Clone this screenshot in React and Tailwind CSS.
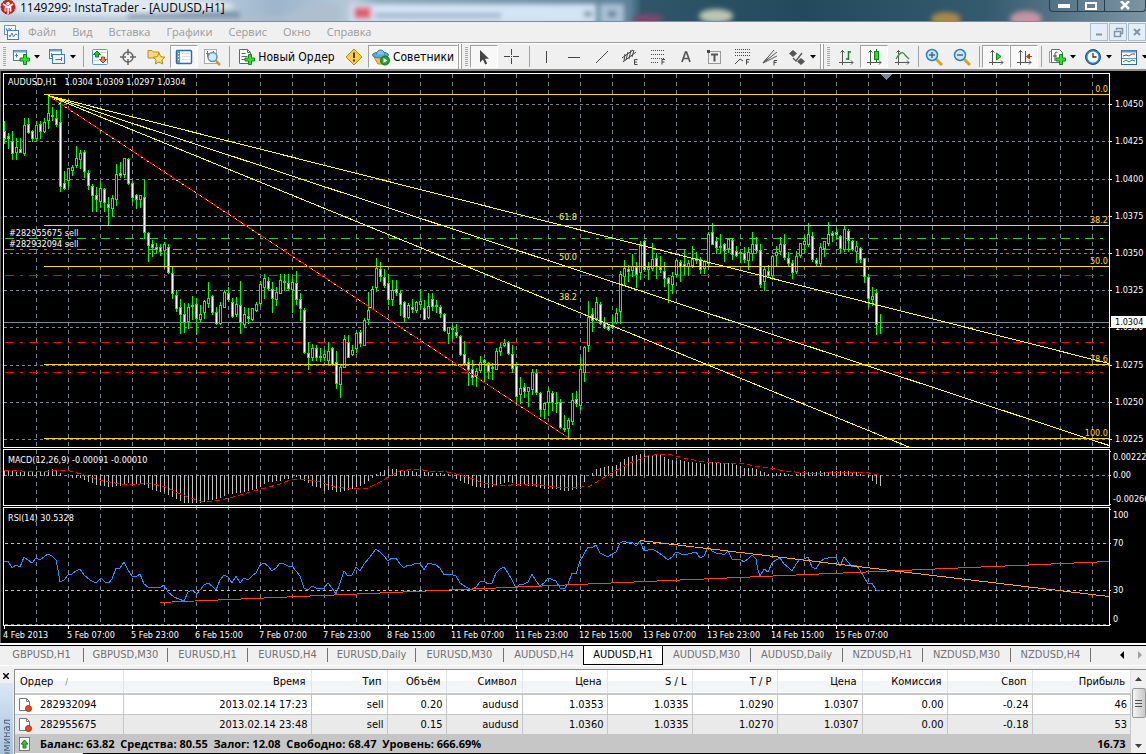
import React, { useState } from 'react';
import clsx from 'clsx';

const menuItems = ['Файл', 'Вид', 'Вставка', 'Графики', 'Сервис', 'Окно', 'Справка'];

const chartTabs = [
  { name: 'GBPUSD,H1', width: 'w-[84px]' },
  { name: 'GBPUSD,M30', width: 'w-[84px]' },
  { name: 'EURUSD,H1', width: 'w-[80px]' },
  { name: 'EURUSD,H4', width: 'w-[80px]' },
  { name: 'EURUSD,Daily', width: 'w-[88px]' },
  { name: 'EURUSD,M30', width: 'w-[88px]' },
  { name: 'AUDUSD,H4', width: 'w-[80px]' },
  { name: 'AUDUSD,H1', width: 'w-[80px]' },
  { name: 'AUDUSD,M30', width: 'w-[88px]' },
  { name: 'AUDUSD,Daily', width: 'w-[92px]' },
  { name: 'NZDUSD,H1', width: 'w-[80px]' },
  { name: 'NZDUSD,M30', width: 'w-[88px]' },
  { name: 'NZDUSD,H4', width: 'w-[80px]' },
];

const columns = [
  { title: 'Ордер', width: 'w-[108px]' },
  { title: 'Время', width: 'w-[188px]' },
  { title: 'Тип', width: 'w-[76px]' },
  { title: 'Объём', width: 'w-[59px]' },
  { title: 'Символ', width: 'w-[76px]' },
  { title: 'Цена', width: 'w-[85px]' },
  { title: 'S / L', width: 'w-[85px]' },
  { title: 'T / P', width: 'w-[85px]' },
  { title: 'Цена', width: 'w-[85px]' },
  { title: 'Комиссия', width: 'w-[85px]' },
  { title: 'Своп', width: 'w-[85px]' },
  { title: 'Прибыль', width: '' },
];

const orders = [
  ['282932094', '2013.02.14 17:23', 'sell', '0.20', 'audusd', '1.0353', '1.0335', '1.0290', '1.0307', '0.00', '-0.24', '46'],
  ['282955675', '2013.02.14 23:48', 'sell', '0.15', 'audusd', '1.0360', '1.0335', '1.0270', '1.0307', '0.00', '-0.18', '53'],
];

// one candle every 4px: high, body top, body bottom, low; "d" = down candle
const candles = `
121 131 138 143 d;133 136 138 148 d;131 141 153 159 d;138 147 152 159 u;138 149 152 152 d;118 125 153 155 u;118 124 132 133 d;130 131 138 141 d;
121 125 138 141 u;121 124 131 138 d;118 122 131 132 u;94 113 120 128 u;107 115 116 120 d;110 118 124 126 d;100 122 186 191 d;171 183 188 189 d;
168 168 180 186 u;165 167 170 175 u;146 158 165 167 u;150 153 159 168 u;150 152 171 177 d;170 173 185 189 d;184 186 195 211 d;187 195 199 211 d;
182 188 201 207 u;188 189 202 211 d;197 204 207 225 d;195 198 208 216 u;164 174 199 205 u;162 173 175 177 d;158 158 174 177 u;158 159 183 184 d;
181 183 197 201 d;194 195 199 208 d;195 195 199 207 u;180 197 232 238 d;232 233 245 261 d;240 244 247 256 d;243 247 249 253 d;244 247 251 255 d;
242 244 250 267 u;244 247 272 273 d;267 273 293 298 d;290 295 308 311 d;299 307 314 333 d;303 314 322 332 d;303 307 321 328 u;296 305 306 319 d;
298 304 318 334 d;305 314 319 321 u;300 301 312 318 u;282 298 303 307 u;295 296 312 314 d;307 312 323 324 d;302 305 323 324 u;290 292 307 307 u;
287 293 299 301 d;298 302 316 317 d;297 304 314 316 u;281 305 322 333 d;307 314 324 327 u;308 316 318 323 d;308 308 319 320 u;302 304 310 311 u;
281 284 303 305 u;274 278 287 298 u;277 281 288 289 d;282 289 298 312 d;287 292 299 305 u;274 280 293 293 u;274 281 282 290 d;274 283 288 290 d;
278 282 289 312 u;271 283 299 304 d;293 299 308 320 d;308 310 352 353 d;342 353 357 369 d;344 348 357 360 u;345 348 357 360 d;348 356 357 361 d;
350 354 357 360 u;342 351 360 363 u;347 348 364 365 d;351 362 383 388 d;365 367 384 397 u;335 339 367 367 u;335 342 357 357 d;345 350 354 355 u;
332 333 348 352 u;330 332 343 346 d;318 320 345 345 u;292 310 319 324 u;286 289 308 309 u;258 268 287 291 u;262 269 276 281 d;269 277 285 287 d;
274 283 299 304 d;280 290 299 305 u;280 289 292 295 d;290 293 304 315 d;301 302 317 321 d;303 305 317 318 u;299 307 309 312 d;301 302 310 312 u;
289 301 304 309 u;300 308 319 319 d;293 306 317 318 u;293 299 306 310 d;300 305 306 312 d;305 307 313 317 d;313 314 330 331 d;327 327 333 343 u;
325 328 329 338 d;324 332 335 337 d;335 336 354 355 d;341 354 363 365 d;358 362 369 385 d;360 369 377 384 d;368 371 375 386 u;356 362 370 372 u;
359 360 362 382 d;362 363 371 378 d;363 367 368 379 d;348 351 369 369 u;343 347 351 355 u;339 343 345 346 u;341 342 353 354 d;345 354 368 372 d;
362 366 396 403 d;377 388 394 403 u;383 387 391 397 d;387 387 391 406 u;369 372 389 394 u;369 373 392 394 d;392 393 409 416 d;402 403 409 418 u;
388 391 402 415 u;391 393 402 410 d;392 403 403 412 d;399 402 427 428 d;415 428 429 431 d;418 420 428 438 u;393 400 421 424 u;391 399 403 406 d;
357 369 405 409 u;346 347 372 381 u;301 317 345 351 u;308 314 320 331 d;297 302 318 320 u;302 304 323 324 d;317 323 327 328 d;325 326 329 330 d;
315 325 327 328 u;308 313 322 323 u;271 274 311 323 u;260 268 276 285 u;265 269 271 281 d;254 266 270 276 u;262 267 274 287 d;241 244 272 279 u;
240 241 269 271 d;262 267 269 279 u;243 259 268 270 u;253 258 266 278 d;256 267 269 272 d;262 271 278 286 d;277 278 283 302 d;272 276 284 293 u;
259 260 274 276 u;260 262 266 281 d;249 264 266 274 d;260 263 266 275 u;246 259 265 267 u;252 258 260 263 d;257 259 269 273 d;260 261 268 273 u;
232 234 263 265 u;223 232 244 244 d;237 241 247 253 d;234 246 247 253 d;243 244 250 261 d;238 239 248 252 u;238 240 254 259 d;246 251 255 256 d;
252 252 253 262 d;247 253 259 262 d;247 252 260 269 u;232 244 253 260 u;237 244 250 252 d;244 250 284 287 d;266 269 281 290 u;265 271 275 276 d;
255 256 275 279 u;246 252 255 266 u;237 244 251 254 u;234 244 257 259 d;252 258 263 266 d;260 263 272 278 d;251 256 271 273 u;243 243 255 257 u;
235 241 244 252 u;223 234 244 246 u;232 236 259 261 d;258 260 263 266 d;243 247 263 265 u;241 241 248 256 u;222 234 243 245 u;231 233 235 241 d;
228 232 234 239 d;235 236 248 252 d;226 229 249 251 u;229 231 240 251 d;240 241 249 250 d;241 246 251 262 u;247 248 259 262 d;258 258 276 282 d;
274 277 298 307 d;287 296 299 305 u;289 293 324 334 d;314 322 322 333 d`
  .trim()
  .split(';')
  .map((row) => {
    const [high, top, bottom, low, dir] = row.trim().split(' ');
    return { high: +high, top: +top, bottom: +bottom, low: +low, down: dir === 'd' };
  });

const macdSeries = [
  {
    start: 4,
    values: [
      4, 4, 4, 3, 3, 3, 4, 4, 4, 4, 4, 5, 6, 5, 2, 0, 0, -2, -2, -2, -4, -6, -7, -9, -9, -10, -11, -11, -10, -10, -8, -7, -9, -8, -8,
      -9, -12, -14, -15, -16, -16, -19, -21, -23, -25, -27, -27, -27, -27, -27, -26, -24, -24, -23, -22, -20, -18, -18, -17, -17,
      -16, -15, -14, -13, -11, -8, -6, -6, -5, -5, -3, -3, -2, -1, -3, -5, -7, -10, -11, -12, -15, -14, -14, -16, -16, -15, -14,
      -13, -11, -10, -8, -5, -2, 1, 3, 5, 6, 6, 6, 5, 4, 4, 4, 3, 5, 3, 3, 2, 2, 2, 1, 1,
    ],
  },
  {
    start: 456,
    values: [
      -3, -5, -7, -8, -10, -11, -11, -12, -12, -11, -10, -8, -7, -6, -7, -10, -10, -9, -10, -10, -11, -12, -13, -13, -13, -13, -14,
      -15, -15, -14, -13, -13, -6, 0, 2, 6, 7, 8, 9, 9, 10, 13, 16, 18, 19, 20, 21, 21, 20, 20, 21, 20, 18, 16, 15, 14, 15, 14, 13,
      13, 12, 12, 11, 13, 13, 12, 12, 12, 12, 11, 10, 9, 7, 7, 7, 6, 4, 3, 1, 2, 2, 2, 2, 1, 0, 1, 2, 4, 3, 3, 3, 4, 3, 2, 4, 4, 4,
      4, 4, 3, 3, 1, 0, -2, -5, -8, -10,
    ],
  },
];

const macdSignal =
  '4,470 40,472 60,470 70,471 84,475 100,480 120,484 140,484 150,483 165,487 185,496 200,501 215,501 230,498 250,492 265,488 280,484 290,480 303,479 320,482 335,487 350,489 368,488 380,482 390,476 400,471 415,469 430,471 447,472 460,475 470,478 483,483 503,486 520,484 535,484 553,487 575,488 590,486 600,480 610,474 630,463 648,456 660,454 672,455 688,459 705,462 720,463 740,463 755,466 770,468 785,471 805,473 825,473 840,472 865,472 877,475';

const rsiLine =
  '4,561 8,561 12,568 16,565 20,567 24,557 28,560 32,563 36,558 40,560 44,557 48,554 52,556 56,560 58,570 60,582 64,580 68,575 72,574 76,571 80,569 84,575 90,580 96,583 101,578 105,582 109,583 112,579 116,568 120,568 124,562 128,570 132,576 136,577 140,574 144,584 148,587 160,588 164,585 168,592 174,597 184,601 188,592 192,590 197,594 200,590 204,585 208,583 212,586 216,590 220,580 224,575 228,577 232,583 236,576 240,583 244,578 248,580 252,576 256,573 260,565 264,563 268,566 272,571 276,568 280,563 284,564 288,566 292,566 296,571 300,576 304,588 308,590 312,586 316,588 324,588 328,583 332,588 336,594 340,583 344,571 348,576 352,575 356,567 360,571 364,564 370,557 376,549 380,552 384,556 388,561 392,558 396,558 400,564 404,568 408,565 412,565 416,563 420,563 424,570 428,563 432,564 436,565 440,568 444,575 450,574 456,576 460,583 466,587 472,590 476,587 480,582 484,581 488,584 492,583 496,573 500,569 504,567 508,573 512,580 516,588 520,584 524,584 528,582 532,574 536,581 540,586 544,583 548,578 556,581 560,588 564,589 568,584 572,573 576,574 580,561 584,554 588,547 592,548 596,545 600,553 604,555 608,557 612,554 616,552 620,543 624,541 628,543 632,542 636,546 640,541 644,551 648,550 652,549 656,551 662,555 668,560 672,557 676,552 684,555 688,554 696,552 700,558 704,556 708,547 712,551 716,553 720,553 724,555 728,551 732,559 740,559 744,562 748,559 752,555 756,559 758,570 760,576 764,569 768,572 772,563 776,560 780,558 784,564 788,567 792,571 796,564 800,559 804,559 808,557 812,567 816,569 820,562 824,559 828,558 832,557 836,558 840,566 844,557 848,562 852,567 856,565 860,570 864,577 868,584 872,583 876,590 880,590';

const gridX = Array.from({ length: 34 }, (_, i) => 36 + i * 32);

const priceLevels = [
  { y: 104, label: '1.0450' },
  { y: 141, label: '1.0425' },
  { y: 179, label: '1.0400' },
  { y: 216, label: '1.0375' },
  { y: 253, label: '1.0350' },
  { y: 290, label: '1.0325' },
  { y: 327, label: '1.0300' },
  { y: 365, label: '1.0275' },
  { y: 402, label: '1.0250' },
  { y: 439, label: '1.0225' },
];

const fibLevels = [
  { y: 94, label: '0.0' },
  { y: 225, label: '38.2' },
  { y: 266, label: '50.0' },
  { y: 364, label: '78.6' },
  { y: 438, label: '100.0' },
];

const fanLines = [
  { x: 1109, y: 363, label: '61.8', labelY: 220 },
  { x: 1109, y: 445, label: '50.0', labelY: 260 },
  { x: 910, y: 447, label: '38.2', labelY: 300 },
];

const timeLabels = [
  '4 Feb 2013', '5 Feb 07:00', '5 Feb 23:00', '6 Feb 15:00', '7 Feb 07:00', '7 Feb 23:00', '8 Feb 15:00',
  '11 Feb 07:00', '11 Feb 23:00', '12 Feb 15:00', '13 Feb 07:00', '13 Feb 23:00', '14 Feb 15:00', '15 Feb 07:00',
];

function HLine({ y, x1 = 4, x2 = 1109, ...rest }) {
  return <line x1={x1} y1={y + 0.5} x2={x2} y2={y + 0.5} {...rest} />;
}

function Chart() {
  return (
    <svg
      viewBox="0 71 1146 572"
      className="block w-full bg-black font-['DejaVu_Sans_Condensed','DejaVu_Sans',sans-serif] text-[9px]"
      role="img"
      aria-label="AUDUSD,H1"
    >
      <g shapeRendering="crispEdges" fill="none" strokeWidth="1">
        <rect x="0" y="71" width="1" height="572" fill="#606060" />

        {/* grid */}
        <g stroke="#778899" strokeDasharray="3 3">
          {gridX.map((x) => (
            <line key={x} x1={x + 0.5} y1="74" x2={x + 0.5} y2="625" strokeDasharray="4 4" />
          ))}
          {priceLevels.map((p) => (
            <HLine key={p.y} y={p.y} />
          ))}
          <HLine y={475} />
        </g>
        <g stroke="#c0c0c0" strokeDasharray="3 3">
          <HLine y={543} x1={5} />
          <HLine y={590} x1={5} />
          <HLine y={624} x1={5} stroke="#778899" />
        </g>

        {/* price line and orders */}
        <HLine y={322} stroke="#778899" />
        <g stroke="#32cd32" strokeDasharray="9 6 3 6">
          <HLine y={238} x1={5} x2={1104} />
          <HLine y={249} x1={5} x2={1104} />
        </g>
        <g stroke="#ff0000" strokeDasharray="9 6 3 6">
          <HLine y={275} x1={5} x2={1104} />
          <HLine y={342} x1={5} x2={1104} />
          <HLine y={372} x1={5} x2={1104} />
        </g>

        {candles.map((c, i) => {
          const x = 4 + i * 4;
          const height = c.bottom - c.top + 1;
          return (
            <g key={i}>
              <rect x={x} y={c.high} width="1" height={c.low - c.high + 1} fill="#00ff00" />
              <rect x={x - 1} y={c.top} width="3" height={height} fill="#00ff00" />
              {height > 2 && (
                <rect x={x} y={c.top + 1} width="1" height={height - 2} fill={c.down ? '#ffffff' : '#000000'} />
              )}
            </g>
          );
        })}

        {/* fibonacci levels and fan */}
        {fibLevels.map((f) => (
          <HLine key={f.y} y={f.y} x1={44} stroke="#ffd700" />
        ))}
        <g stroke="#ffff00">
          {fanLines.map((f) => (
            <line key={f.label} x1="48" y1="95.5" x2={f.x} y2={f.y + 0.5} />
          ))}
        </g>
        <line x1="48" y1="95.5" x2="568" y2="437.5" stroke="#ff0000" />
        <line x1="48" y1="95.5" x2="568" y2="437.5" stroke="#ffff00" strokeDasharray="2 5" />

        {/* MACD */}
        {macdSeries.map((s) =>
          s.values.map((v, i) => (
            <rect
              key={`${s.start}-${i}`}
              x={s.start + i * 4}
              y={v > 0 ? 475 - v : 475}
              width="1"
              height={v === 0 ? 0 : Math.abs(v) + 1}
              fill="#c0c0c0"
            />
          ))
        )}
        <polyline points={macdSignal} stroke="#ff0000" strokeDasharray="5 3" />

        {/* RSI */}
        <polyline points={rsiLine} stroke="#1e90ff" />
        <line x1="160" y1="602.5" x2="1109" y2="561.5" stroke="#ff4500" />
        <line x1="640" y1="540.5" x2="1109" y2="596.5" stroke="#ffa500" />

        {/* frames */}
        <g stroke="#ffffff">
          <rect x="3.5" y="73.5" width="1106" height="374" />
          <rect x="3.5" y="449.5" width="1106" height="56" />
          <rect x="3.5" y="507.5" width="1106" height="118" />
          {priceLevels.map((p) => (
            <HLine key={p.y} y={p.y} x1={1110} x2={1112} />
          ))}
          {[451, 475, 504, 509, 543, 590, 624].map((y) => (
            <HLine key={y} y={y} x1={1110} x2={1111} />
          ))}
          {timeLabels.map((label, i) => (
            <line key={label} x1={4.5 + i * 64} y1="626" x2={4.5 + i * 64} y2="629" />
          ))}
        </g>
        <path d="M881 74h11l-5.5 6z" fill="#778899" />
      </g>

      <g fill="#ffffff">
        <text x="8" y="85" className="whitespace-pre">{'AUDUSD,H1   1.0304 1.0309 1.0297 1.0304'}</text>
        <text x="9" y="236">#282955675 sell</text>
        <text x="9" y="247">#282932094 sell</text>
        <text x="8" y="463">MACD(12,26,9) -0.00091 -0.00010</text>
        <text x="8" y="521">RSI(14) 30.5328</text>
        {priceLevels.map((p) => (
          <text key={p.y} x="1115" y={p.y + 3}>{p.label}</text>
        ))}
        <text x="1113" y="460">0.002222</text>
        <text x="1113" y="478">0.00</text>
        <text x="1113" y="502">-0.00266</text>
        <text x="1113" y="518">100</text>
        <text x="1113" y="546">70</text>
        <text x="1113" y="593">30</text>
        <text x="1113" y="622">0</text>
        {timeLabels.map((label, i) => (
          <text key={label} x={3 + i * 64} y="638">{label}</text>
        ))}
      </g>
      <rect x="1111" y="316" width="35" height="12" fill="#ffffff" />
      <text x="1115" y="325" fill="#000000">1.0304</text>
      <g fill="#ffd700" textAnchor="end">
        {fibLevels.map((f) => (
          <text key={f.y} x="1108" y={f.y - 2}>{f.label}</text>
        ))}
      </g>
      <g fill="#ffff00">
        {fanLines.map((f) => (
          <text key={f.label} x="559" y={f.labelY}>{f.label}</text>
        ))}
      </g>
    </svg>
  );
}

function Icon({ children, size = 18 }) {
  return (
    <svg width={size} height={size} viewBox="0 0 18 18" fill="none" className="shrink-0" aria-hidden="true">
      {children}
    </svg>
  );
}

function Plus() {
  return (
    <path d="M11.500 6.500h3v3.500h3v3h-3v3.500h-3v-3.500h-3.500v-3h3.500z" fill="#2fe02f" stroke="#0a8a1a" />
  );
}

function Axes() {
  return <path d="M5.500 2v15M3.500 4.500l2-2 2 2M2 14.500h14M14 12.500l2 2-2 2" stroke="#555" />;
}

const icons = {
  newChart: (
    <>
      <rect x="1.500" y="2.500" width="13" height="10" fill="#fff" stroke="#3f7fb8" />
      <path d="M2 3.500h12" stroke="#6fa8dc" strokeWidth="2" />
      <path d="M4.500 5.500v4M3 7.500h3" stroke="#3f7fb8" />
      <Plus />
    </>
  ),
  profiles: (
    <>
      <rect x="1.500" y="1.500" width="12" height="9" fill="#fff" stroke="#3f7fb8" />
      <path d="M2 2.500h11" stroke="#6fa8dc" strokeWidth="2" />
      <rect x="4.500" y="6.500" width="12" height="9" fill="#eaf3fb" stroke="#3f7fb8" />
      <path d="M3 6.500h6M7.500 11.500h6M3.500 5v4M13.500 9v4" stroke="#3f7fb8" />
    </>
  ),
  watch: (
    <>
      <rect x="1.500" y="1.500" width="15" height="15" rx="1" fill="#fff" stroke="#5b9bd5" />
      <path d="M6 3l3.500 3.500H7.500V9h-3V6.500h-2z" fill="#2ec22e" stroke="#11801c" />
      <path d="M12 15l3.500-3.500h-2V9h-3v2.500h-2z" fill="#f08050" stroke="#b83a10" />
      <path d="M10 4.500h5M3 12.500h5" stroke="#c5d9ea" />
    </>
  ),
  target: (
    <>
      <circle cx="9" cy="9" r="5" stroke="#666" strokeWidth="1.500" />
      <path d="M9 1v6M9 11v6M1 9h6M11 9h6" stroke="#666" strokeWidth="1.500" />
    </>
  ),
  favorites: (
    <>
      <path d="M1 2.500h4l1.500 1.500H12v6H1z" fill="#f5d976" stroke="#b58e22" />
      <path d="M12 5l1.800 3.700 4 .5-2.900 2.800.8 4-3.700-2-3.600 2 .7-4-2.800-2.800 4-.5z" fill="#fde27a" stroke="#b98a17" />
    </>
  ),
  navigator: (
    <>
      <rect x="1.500" y="2.500" width="15" height="13" rx="1" fill="#fff" stroke="#2d6ca8" strokeWidth="1.500" />
      <rect x="2" y="3" width="3" height="12" fill="#5b9bd5" />
      <path d="M7 5.500h8M7 8.500h8M7 11.500h8" stroke="#d3e0ec" />
      <path d="M3 5.500h1M3 8.500h1M3 11.500h1" stroke="#fff" />
    </>
  ),
  tester: (
    <>
      <rect x="1.500" y="1.500" width="12" height="14" fill="#fff" stroke="#aaa" />
      <path d="M4.500 3v6M3 5.500h3M10.500 3v3" stroke="#777" />
      <path d="M13 13l4 4" stroke="#c99a2e" strokeWidth="2.500" />
      <circle cx="9.500" cy="9" r="4.500" fill="#cfe5f8" fillOpacity=".9" stroke="#5f93c2" strokeWidth="1.500" />
    </>
  ),
  order: (
    <>
      <path d="M2.500 1.500h8l3 3v11h-11z" fill="#fff" stroke="#666" />
      <path d="M10.500 1.500v3h3M4.500 5.500h4M4.500 8.500h6M4.500 11.500h4" stroke="#666" />
      <Plus />
    </>
  ),
  warning: (
    <>
      <path d="M9 1l8 8-8 8-8-8z" fill="#f7cf3c" stroke="#b48a12" strokeLinejoin="round" />
      <path d="M9 4.500v5.500M9 11.500v2" stroke="#4a3800" strokeWidth="2" />
    </>
  ),
  advisor: (
    <>
      <path d="M2 9l4 7h7l3-7z" fill="#f2c645" stroke="#b78a1c" />
      <ellipse cx="8.500" cy="7" rx="8" ry="3" fill="#58a9d8" stroke="#2f7fae" />
      <path d="M4.500 6.500c0-6 8-6 8 0" fill="#7cc4ea" stroke="#2f7fae" />
      <circle cx="13" cy="12.500" r="4.500" fill="#1fa32c" stroke="#0b7d17" />
      <path d="M11.500 10l4 2.500-4 2.500z" fill="#fff" />
    </>
  ),
  cursor: <path d="M5 2v12.500l3-3 2.200 5 2-1-2.200-4.700h4z" fill="#444" />,
  cross: <path d="M8.500 1v6M8.500 10v6M1 8.500h6M10 8.500h6M8 8.500h1" stroke="#444" />,
  vline: <path d="M9.500 3v12" stroke="#444" />,
  hline: <path d="M3 9.500h12" stroke="#444" />,
  trend: <path d="M3 15L15 3" stroke="#444" />,
  channel: (
    <>
      <path d="M1 10L12 2M2 14L15 4M4 6l-1 7M7 4l-2 8M10 2l-2 9M13 2l-2 7" stroke="#444" />
      <path d="M16.500 11.500h-3v5h3M13.500 14h2.500" stroke="#444" />
    </>
  ),
  fibo: (
    <>
      <path d="M2 2.500h14M2 6.500h14M2 10.500h14M2 14.500h8" stroke="#444" strokeDasharray="1 1" />
      <path d="M16 11.500h-3v5M13 14h2.500" stroke="#444" />
    </>
  ),
  text: <path d="M5 14l3.500-10h1L13 14M6.500 10.500h5" stroke="#555" strokeWidth="1.700" />,
  label: (
    <>
      <rect x="3.500" y="3.500" width="12" height="12" stroke="#444" strokeDasharray="1 1" />
      <rect x="2" y="2" width="3" height="3" fill="#444" />
      <path d="M6 6.500h7M9.500 6.500v7" stroke="#555" strokeWidth="2" />
    </>
  ),
  fiboTime: (
    <>
      <path d="M2 1.500h15M2 4.500h15M2 7.500h15" stroke="#444" strokeDasharray="1 1" />
      <path d="M2 16l5-5 3 2M16.500 11.500h-3v5M13.500 14h2.500" stroke="#444" />
    </>
  ),
  fan: (
    <>
      <path d="M2 15L13 2M2 15L16 4M2 15L16 8M2 15l4-5" stroke="#555" />
      <path d="M16 12.500h-3v5M13 14.500h2.500" stroke="#444" />
    </>
  ),
  arrows: (
    <>
      <path d="M5 2l4 3.500-4 3.500-4-3.500zM13 10l4 3.500-4 3.500-4-3.500z" fill="#555" />
      <path d="M5 10l3 3 6-8" stroke="#555" strokeWidth="1.300" />
    </>
  ),
  bars: (
    <>
      <Axes />
      <path d="M11.500 3v9M11.500 4h2.500M9 11h2.500" stroke="#0a8a1a" strokeWidth="1.500" />
    </>
  ),
  candle: (
    <>
      <Axes />
      <path d="M11.500 1v13" stroke="#0a8a1a" />
      <rect x="9.500" y="3.500" width="4" height="8" fill="#2fd62f" stroke="#0a8a1a" />
    </>
  ),
  line: (
    <>
      <Axes />
      <path d="M3 11c4-7 7-8 9-4l4 4" stroke="#2a9a3a" strokeWidth="1.300" />
    </>
  ),
  zoomIn: (
    <>
      <path d="M11 11l6 6" stroke="#d7a520" strokeWidth="3" />
      <circle cx="7" cy="7" r="5.500" fill="#cfe6fa" stroke="#2d7fc0" strokeWidth="1.500" />
      <path d="M7 4v6M4 7h6" stroke="#2d6fa8" strokeWidth="1.500" />
    </>
  ),
  zoomOut: (
    <>
      <path d="M11 11l6 6" stroke="#d7a520" strokeWidth="3" />
      <circle cx="7" cy="7" r="5.500" fill="#cfe6fa" stroke="#2d7fc0" strokeWidth="1.500" />
      <path d="M4 7h6" stroke="#2d6fa8" strokeWidth="1.500" />
    </>
  ),
  scroll: (
    <>
      <Axes />
      <path d="M9.500 5v7l4.500-3.500z" fill="#2fd62f" stroke="#0a8a1a" />
    </>
  ),
  shift: (
    <>
      <Axes />
      <path d="M10.500 3v11" stroke="#2d5f90" />
      <path d="M17 8.500h-4M14.500 6l-3 2.500 3 2.500z" fill="#d84a1c" stroke="#c03a10" />
    </>
  ),
  indicators: (
    <>
      <path d="M1.500 3.500h6v11h-6z" fill="#fff" stroke="#999" />
      <path d="M3.500 1.500h8l3 3v10h-11z" fill="#fff" stroke="#666" />
      <path d="M9.500 4.500c-2-1-2.500 0-2.500 2V13M5 8h4" stroke="#444" />
      <Plus />
    </>
  ),
  clock: (
    <>
      <circle cx="9" cy="9" r="7.500" fill="#2d86d4" stroke="#174f86" />
      <circle cx="9" cy="9" r="5.500" fill="#f6fbff" />
      <path d="M9 5v4h3.500" stroke="#333" strokeWidth="1.300" />
    </>
  ),
  template: (
    <>
      <rect x="1.500" y="2.500" width="15" height="14" fill="#fff" stroke="#2d6ca8" />
      <path d="M2 3.500h14" stroke="#5b9bd5" strokeWidth="2" />
      <path d="M2 10.500h14" stroke="#5b9bd5" />
      <path d="M3 8l3-1 3 1 3-2h3" stroke="#a83a2a" />
      <path d="M3 14l3-2 3 2 3-2 3 1" stroke="#2a9a3a" />
    </>
  ),
};

function Caret() {
  return (
    <svg width="7" height="4" viewBox="0 0 7 4" className="shrink-0" aria-hidden="true">
      <path d="M1 0h6L4 3.500z" fill="#000" />
    </svg>
  );
}

function ToolButton({ icon, title, caret, pressed, text, className = 'w-7' }) {
  return (
    <button
      type="button"
      title={title}
      aria-pressed={pressed}
      className={clsx(
        'flex h-[23px] shrink-0 items-center justify-center gap-[3px] border',
        pressed ? 'border-t-[#a0a0a0] border-l-[#a0a0a0] border-r-white border-b-white bg-[#f8f8f8]' : 'border-transparent',
        caret ? 'w-9' : className
      )}
    >
      <Icon>{icons[icon]}</Icon>
      {text && <span className="text-[12px] text-black">{text}</span>}
      {caret && <Caret />}
    </button>
  );
}

function Separator({ className = 'w-1.5' }) {
  return (
    <span className={clsx('flex h-[21px] shrink-0 justify-center', className)}>
      <span className="w-px bg-[#a0a0a0]" />
    </span>
  );
}

function Grip() {
  return (
    <span className="flex w-2 shrink-0 justify-center">
      <span className="h-[19px] w-[3px] bg-[repeating-linear-gradient(to_bottom,#a8a8a8_0_1px,#f0f0f0_1px_2px)]" />
    </span>
  );
}

function ToolbarEnd() {
  return <span className="h-[25px] w-1 shrink-0 border-r border-l border-[#a0a0a0] bg-white" />;
}

function Toolbar() {
  return (
    <div className="flex h-7 items-center overflow-hidden border-t border-b-2 border-t-white border-b-[#8c8c8c] bg-[#f0f0f0]">
      <Grip />
      <ToolButton icon="newChart" title="Новый график" caret />
      <ToolButton icon="profiles" title="Профили" caret />
      <Separator />
      <ToolButton icon="watch" title="Обзор рынка" />
      <ToolButton icon="target" title="Окно данных" />
      <ToolButton icon="favorites" title="Навигатор" />
      <ToolButton icon="navigator" title="Терминал" pressed />
      <ToolButton icon="tester" title="Тестер стратегий" />
      <Separator />
      <ToolButton icon="order" text="Новый Ордер" className="w-[108px]" />
      <ToolButton icon="warning" title="MetaEditor" />
      <ToolButton icon="advisor" text="Советники" pressed className="w-[90px]" />
      <ToolbarEnd />
      <Grip />
      <ToolButton icon="cursor" title="Курсор" pressed />
      <ToolButton icon="cross" title="Перекрестие" />
      <Separator />
      <ToolButton icon="vline" title="Вертикальная линия" />
      <ToolButton icon="hline" title="Горизонтальная линия" />
      <ToolButton icon="trend" title="Трендовая линия" />
      <ToolButton icon="channel" title="Равноудаленный канал" />
      <ToolButton icon="fibo" title="Линии Фибоначчи" />
      <ToolButton icon="text" title="Текст" />
      <ToolButton icon="label" title="Текстовая метка" />
      <ToolButton icon="fiboTime" title="Расширение Фибоначчи" />
      <ToolButton icon="fan" title="Веер Фибоначчи" />
      <ToolButton icon="arrows" title="Стрелки" caret />
      <ToolbarEnd />
      <Grip />
      <ToolButton icon="bars" title="Бары" />
      <ToolButton icon="candle" title="Японские свечи" pressed />
      <ToolButton icon="line" title="Линия" />
      <Separator className="w-1" />
      <ToolButton icon="zoomIn" title="Увеличить" />
      <ToolButton icon="zoomOut" title="Уменьшить" />
      <Separator />
      <ToolButton icon="scroll" title="Автопрокрутка" pressed />
      <ToolButton icon="shift" title="Сдвиг графика" pressed />
      <Separator />
      <ToolButton icon="indicators" title="Индикаторы" caret />
      <ToolButton icon="clock" title="Периоды" caret />
      <ToolButton icon="template" title="Шаблоны" caret />
    </div>
  );
}

function TitleBar() {
  return (
    <header className="relative flex h-[22px] shrink-0 justify-between overflow-hidden border-b border-[#7f8d98] bg-[#35596c] font-['Open_Sans','Noto_Sans',sans-serif]">
      {/* glass with the browser window showing through */}
      <svg
        viewBox="0 0 1146 21"
        preserveAspectRatio="none"
        className="absolute inset-0 h-full w-full"
        aria-hidden="true"
      >
        <defs>
          <linearGradient id="glass" x1="0" x2="1" y1="0" y2="0">
            <stop offset="0" stopColor="#c3d6ea" />
            <stop offset=".12" stopColor="#d7e1ec" />
            <stop offset=".24" stopColor="#9db6cc" />
            <stop offset=".31" stopColor="#b7c9d8" />
            <stop offset=".33" stopColor="#8fa9bb" />
            <stop offset=".55" stopColor="#5b8299" />
            <stop offset=".56" stopColor="#2f5669" />
            <stop offset=".7" stopColor="#23495d" />
            <stop offset=".86" stopColor="#345a6e" />
            <stop offset="1" stopColor="#7c95a4" />
          </linearGradient>
          <filter id="soft" x="-20%" y="-100%" width="140%" height="300%">
            <feGaussianBlur stdDeviation="2.500" />
          </filter>
        </defs>
        <rect width="1146" height="21" fill="url(#glass)" />
        <g filter="url(#soft)">
          <path d="M0 17h280l30-12h30v16H0z" fill="#aebfcf" />
          <rect x="128" y="12" width="112" height="6" fill="#7a8fa6" />
          <rect x="350" y="4" width="246" height="20" fill="#d3e4f6" />
          <rect x="600" y="4" width="24" height="20" fill="#a9c1d6" />
          <rect x="354" y="7" width="17" height="12" fill="#e06070" />
          <rect x="375" y="13" width="126" height="5" fill="#9fb2c8" />
          <rect x="584" y="11" width="8" height="6" fill="#8097ac" />
          <rect x="608" y="11" width="8" height="6" fill="#5d7c94" />
          <ellipse cx="648" cy="19" rx="16" ry="5" fill="#7a4a70" />
          <ellipse cx="716" cy="16" rx="17" ry="7" fill="#b9c6b4" />
          <ellipse cx="946" cy="19" rx="15" ry="7" fill="#a58a4a" />
          <ellipse cx="1026" cy="19" rx="16" ry="8" fill="#c294a4" />
          <ellipse cx="110" cy="6" rx="125" ry="8" fill="#dfe9f3" />
        </g>
      </svg>
      <div className="relative flex h-4 items-center gap-1">
        <svg width="16" height="16" viewBox="0 0 16 16" aria-hidden="true">
          <circle cx="8" cy="7" r="7" fill="#e01818" stroke="#b00c0c" strokeDasharray="2 1" />
          <path d="M3 4l5 3 5-3M8 7v7M5.500 6.500v5M10.500 6.500v5" stroke="#fff" strokeWidth="1.700" fill="none" />
          <circle cx="8" cy="3.500" r="1.800" fill="#fff" />
        </svg>
        <h1 className="text-[12px] leading-4 text-black">1149299: InstaTrader - [AUDUSD,H1]</h1>
      </div>
      <div className="relative flex h-3 rounded-b border border-t-0 border-[#2c3c48] text-white">
        <button type="button" title="Свернуть" className="flex w-7 items-center justify-center border-r border-[#2c3c48]">
          <span className="h-1 w-3 bg-white" />
        </button>
        <button type="button" title="Развернуть" className="flex w-[27px] items-center justify-center border-r border-[#2c3c48]">
          <span className="h-2 w-3 border-2 border-white" />
        </button>
        <button type="button" title="Закрыть" className="flex w-10 items-center justify-center">
          <svg width="12" height="9" viewBox="0 0 12 9" aria-hidden="true">
            <path d="M2 0l8 8M10 0L2 8" stroke="#fff" strokeWidth="2.500" />
          </svg>
        </button>
      </div>
    </header>
  );
}

function MdiButton({ title, children }) {
  return (
    <button type="button" title={title} className="flex h-[18px] w-[18px] items-center justify-center border border-[#a9bccf] bg-[#e4eef8]">
      <svg width="12" height="12" viewBox="0 0 12 12" fill="none" stroke="#8296aa" aria-hidden="true">
        {children}
      </svg>
    </button>
  );
}

function MenuBar() {
  return (
    <div className="flex h-[21px] shrink-0 items-center justify-between overflow-hidden border-b border-[#a0a0a0] bg-[#f0f0f0] pl-1">
      <nav className="flex items-center font-['Open_Sans','Noto_Sans',sans-serif]">
        <svg width="15" height="15" viewBox="0 0 15 15" fill="none" className="mr-px" aria-hidden="true">
          <rect x=".5" y=".5" width="11" height="9" fill="#fff" stroke="#5b9bd5" />
          <path d="M2 3l1 3 2-3 1 2 2-2" stroke="#5b9bd5" />
          <rect x="3.500" y="5.500" width="11" height="9" fill="#fff" stroke="#3f7fc8" />
          <path d="M5 10l1 2 2-4 1.500 4 2-3 2 1" stroke="#3f7fc8" />
        </svg>
        {menuItems.map((item) => (
          <button key={item} type="button" className="px-2 text-[11px] text-[#9a9a9a]">
            {item}
          </button>
        ))}
      </nav>
      <div className="flex gap-px">
        <MdiButton title="Свернуть окно">
          <path d="M3 8.500h6" strokeWidth="2" />
        </MdiButton>
        <MdiButton title="Восстановить">
          <path d="M4.500 4V2.500h6v5H9M2.500 5.500h6v5h-6z" strokeWidth="1.500" />
        </MdiButton>
        <MdiButton title="Закрыть окно">
          <path d="M3 3l6 6M9 3l-6 6" strokeWidth="2" />
        </MdiButton>
      </div>
    </div>
  );
}

function ChartTabs({ active, onSelect }) {
  return (
    <div className="flex h-[26px] shrink-0 flex-col border-t-2 border-white bg-[#f0f0f0]">
      <div className="flex h-5 items-start border-t border-black">
        {chartTabs.map((tab, i) => (
          <button
            key={tab.name}
            type="button"
            onClick={() => onSelect(tab.name)}
            className={clsx(
              'shrink-0 text-[11px]',
              tab.width,
              tab.name === active
                ? '-ml-px h-[19px] border-r border-b border-l border-black bg-white text-black'
                : 'my-[2px] h-[14px] text-[#707070]',
              tab.name !== active && chartTabs[i + 1]?.name !== active && 'border-r border-[#707070]'
            )}
          >
            <span className="flex h-full items-center justify-center">{tab.name}</span>
          </button>
        ))}
        <span className="flex h-[18px] grow items-center justify-end gap-3 pr-1">
          <button type="button" title="Назад">
            <svg width="5" height="8" viewBox="0 0 5 8" className="block"><path d="M4 0v8L0 4z" fill="#000" /></svg>
          </button>
          <button type="button" title="Вперёд">
            <svg width="5" height="8" viewBox="0 0 5 8" className="block"><path d="M1 0v8l4-4z" fill="#a0a0a0" /></svg>
          </button>
        </span>
      </div>
      <div className="h-px bg-white" />
    </div>
  );
}

function OrderIcon() {
  return (
    <svg width="14" height="15" viewBox="0 0 14 15" fill="none" className="shrink-0" aria-hidden="true">
      <path d="M1.500 1.500h7l3 3v9h-10z" fill="#fff" stroke="#777" />
      <path d="M8.500 1.500v3h3" stroke="#777" />
      <circle cx="10.500" cy="11.500" r="3" fill="#e8481c" stroke="#a82c08" />
    </svg>
  );
}

function Terminal() {
  return (
    <section className="flex grow overflow-hidden bg-[#f0f0f0]">
      <div className="flex w-[15px] shrink-0 flex-col border-r border-[#8c8c8c]">
        <button type="button" title="Закрыть" className="flex h-[14px] shrink-0 items-center pl-[3px]">
          <svg width="6" height="6" viewBox="0 0 6 6" aria-hidden="true">
            <path d="M0 0l6 6M6 0L0 6" stroke="#000" strokeWidth="1.500" />
          </svg>
        </button>
        <div className="h-0 w-[13px] grow overflow-hidden bg-linear-to-b from-[#dbe7f3] to-[#a9c3dc] pt-9">
          <span className="block rotate-180 text-[11px] leading-[13px] text-[#4a5a6a] [writing-mode:vertical-rl]">
            Терминал
          </span>
        </div>
      </div>

      <div className="flex grow flex-col">
        <div className="flex border-t border-[#8c8c8c]">
          <table className="w-full table-fixed border-collapse text-[11px] leading-none text-black">
            <thead>
              <tr className="h-6 border-b-2 border-[#c8c8c8] bg-linear-to-b from-white from-50% to-[#f3f4f6] to-50%">
                {columns.map((col, i) => (
                  <th
                    key={i}
                    scope="col"
                    className={clsx('border-r border-[#e0e3e8] px-[5px] font-normal', col.width, i === 0 ? 'text-left' : 'text-right')}
                  >
                    {col.title}
                    {i === 0 && <span className="pl-3 text-[9px] text-[#808080]">/</span>}
                  </th>
                ))}
              </tr>
            </thead>
            <tbody>
              {orders.map((order, row) => (
                <tr key={order[0]} className={clsx('h-5 border-b border-[#c6c6c6]', row % 2 ? 'bg-[#eaeaea]' : 'bg-white')}>
                  {order.map((cell, i) => (
                    <td key={i} className="border-r border-[#c6c6c6] px-[3px] text-right">
                      {i === 0 ? (
                        <span className="flex items-center gap-2">
                          <OrderIcon />
                          {cell}
                        </span>
                      ) : (
                        cell
                      )}
                    </td>
                  ))}
                </tr>
              ))}
            </tbody>
            <tfoot>
              <tr className="h-[19px] bg-[#c6c6c6] font-['Open_Sans','Noto_Sans',sans-serif] font-bold">
                <td colSpan={11} className="px-[3px]">
                  <span className="flex items-center gap-2 whitespace-pre">
                    <svg width="14" height="14" viewBox="0 0 14 14" aria-hidden="true">
                      <rect x="1.500" y=".5" width="10" height="13" fill="#fff" stroke="#777" />
                      <path d="M6.500 3l3.500 4H8v4H5V7H3z" fill="#2ec22e" stroke="#11801c" />
                    </svg>
                    {'Баланс: 63.82  Средства: 80.55  Залог: 12.08  Свободно: 68.47  Уровень: 666.69%'}
                  </span>
                </td>
                <td className="px-[5px] text-right">16.73</td>
              </tr>
            </tfoot>
          </table>
          <div className="flex w-[15px] shrink-0 flex-col items-center bg-[#f0f0f0]" aria-hidden="true">
            <svg width="7" height="18" viewBox="0 0 7 18"><path d="M0 11h7L3.500 7z" fill="#404040" /></svg>
            <span className="flex h-[30px] w-[14px] flex-col items-center justify-center gap-[2px] rounded-[2px] border border-[#979797] bg-linear-to-r from-[#f5f5f5] to-[#c8c8c8]">
              <span className="h-px w-[7px] bg-[#505050]" />
              <span className="h-px w-[7px] bg-[#505050]" />
              <span className="h-px w-[7px] bg-[#505050]" />
            </span>
            <span className="grow" />
            <svg width="7" height="14" viewBox="0 0 7 14"><path d="M0 5h7L3.500 9z" fill="#404040" /></svg>
          </div>
        </div>
        <div className="flex grow">
          <span className="w-[69px] border-r border-black bg-white" />
          <span className="grow border-t border-black" />
        </div>
      </div>
    </section>
  );
}

export default function App() {
  const [activeTab, setActiveTab] = useState('AUDUSD,H1');

  return (
    <div className="flex h-screen flex-col overflow-hidden bg-[#f0f0f0] font-['DejaVu_Sans_Condensed','DejaVu_Sans',sans-serif]">
      <TitleBar />
      <MenuBar />
      <Toolbar />
      <main className="shrink-0 bg-black">
        <Chart />
      </main>
      <ChartTabs active={activeTab} onSelect={setActiveTab} />
      <Terminal />
    </div>
  );
}
